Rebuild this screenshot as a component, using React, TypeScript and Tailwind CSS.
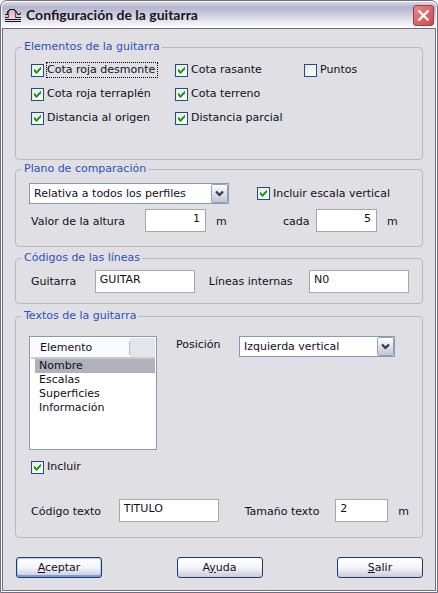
import { useState } from "react";
import type { ReactNode } from "react";

const field =
  "h-[23px] border border-[#a7a6aa] bg-white px-1 pb-1 text-[11px] leading-[14px] text-[#101018] outline-none";

function Group({ title, className, children }: { title: string; className: string; children: ReactNode }) {
  return (
    <fieldset className={`min-w-0 rounded-[4px] border border-[#b9b8c4] px-[13px] ${className}`}>
      <legend className="-ml-[7px] h-[14px] px-0.5 text-[#2c4fc0]">{title}</legend>
      {children}
    </fieldset>
  );
}

function Check({ label, checked = true, focused = false }: { label: string; checked?: boolean; focused?: boolean }) {
  const [on, setOn] = useState(checked);
  return (
    <label className="flex h-[14px] items-center gap-0.5 whitespace-nowrap">
      <span className="relative h-[13px] w-[13px] shrink-0">
        <input
          type="checkbox"
          checked={on}
          onChange={(e) => setOn(e.target.checked)}
          className="block h-[13px] w-[13px] appearance-none border border-[#1f4e7f] bg-linear-to-br from-[#e6e8e4] to-white"
        />
        {on && (
          <svg viewBox="0 0 13 13" className="pointer-events-none absolute inset-0" shapeRendering="crispEdges">
            <path d="M3 5h1v1h1v1h1v-1h1v-1h1v-1h1v-1h1v3h-1v1h-1v1h-1v1h-1v1h-1v-1h-1v-1h-1z" fill="#21a121" />
          </svg>
        )}
      </span>
      <span className={`border border-dotted pr-0.5 ${focused ? "border-black" : "border-transparent"}`}>{label}</span>
    </label>
  );
}

function Combo({ id, options, className, label }: { id: string; options: string[]; className: string; label?: string }) {
  return (
    <div className={`relative h-[21px] ${className}`}>
      <select
        id={id}
        aria-label={label}
        className="block h-full w-full appearance-none border border-[#7f9db9] bg-white pr-5 pl-1 text-[11px] leading-[14px] text-[#101018] outline-none"
      >
        {options.map((o) => (
          <option key={o}>{o}</option>
        ))}
      </select>
      <span className="pointer-events-none absolute top-px right-px flex h-[19px] w-[17px] items-center justify-center rounded-[2px] border border-[#94a2bd] bg-linear-to-b from-white to-[#c3c3d2]">
        <svg width="9" height="7" viewBox="0 0 9 7">
          <path d="M1 1.5l3.5 3.5L8 1.5" fill="none" stroke="#33334a" strokeWidth="2.2" />
        </svg>
      </span>
    </div>
  );
}

function PushButton({ before = "", mnemonic, after, primary = false }: { before?: string; mnemonic: string; after: string; primary?: boolean }) {
  return (
    <button
      type="button"
      className={`h-[21px] w-[86px] rounded-[3px] border border-[#1c3f70] bg-linear-to-b from-white via-[#f4f4f9] to-[#c9c9dc] leading-[14px] ${
        primary ? "shadow-[inset_0_-2px_0_#7f9be0,inset_0_0_0_1px_#b9cbf3]" : ""
      }`}
    >
      {before}
      <u>{mnemonic}</u>
      {after}
    </button>
  );
}

const items = ["Nombre", "Escalas", "Superficies", "Información"];

export default function App() {
  const [selected, setSelected] = useState("Nombre");
  return (
    <div className="bg-[#f4f4f4]">
      <main className="rounded-t-[7px] border border-[#706d85] bg-white p-px font-['DejaVu_Sans',Verdana,sans-serif] text-[11px] leading-[14px] text-[#101018]">
        <header className="flex h-[26px] items-center gap-[5px] rounded-t-[5px] bg-linear-to-b from-[#d9d9e6] via-[#b4b4cc] via-20% to-white pr-0.5 pl-[3px]">
          <svg width="16" height="16" viewBox="0 0 16 16" fill="none" aria-hidden="true">
            <path d="M0 10.5h4M10 10.5h6M0 12.5h16M0 14.5h16" stroke="#111" shapeRendering="crispEdges" />
            <path d="M0 7.500h2.500V5L5 2.500h4L11.500 5l1.500 2.500h1.500L16 5.500" stroke="#111" strokeWidth="1.200" />
            <path d="M3.500 11V5M10.500 11V5" stroke="#e02030" strokeWidth="1.200" />
          </svg>
          <h1 className="flex-1 font-[Lato,sans-serif] text-[14px] leading-[18px] font-bold text-[#17171f]">
            Configuración de la guitarra
          </h1>
          <button
            type="button"
            aria-label="Cerrar"
            className="flex h-[21px] w-[21px] items-center justify-center rounded-[3px] border border-[#a83a48] bg-linear-to-br from-[#e58a8a] to-[#cc4848]"
          >
            <svg width="13" height="13" viewBox="0 0 13 13" aria-hidden="true">
              <path d="M1.500 1.500l10 10M11.500 1.500l-10 10" stroke="white" strokeWidth="2.300" />
            </svg>
          </button>
        </header>

        <form className="border border-[#706d85] bg-[#e0dfe4] px-3 pt-[11px] pb-3" onSubmit={(e) => e.preventDefault()}>
          <Group title="Elementos de la guitarra" className="pt-[9px] pb-[34px]">
            <div className="grid grid-cols-[144fr_129fr_105fr] gap-y-2.5 pl-0.5">
              <Check label="Cota roja desmonte" focused />
              <Check label="Cota rasante" />
              <Check label="Puntos" checked={false} />
              <Check label="Cota roja terraplén" />
              <Check label="Cota terreno" />
              <span />
              <Check label="Distancia al origen" />
              <Check label="Distancia parcial" />
            </div>
          </Group>

          <Group title="Plano de comparación" className="mt-0.5 pt-[7px] pb-[14px]">
            <div className="flex items-center gap-7">
              <Combo id="plano" label="Plano de comparación" className="w-[200px]" options={["Relativa a todos los perfiles"]} />
              <Check label="Incluir escala vertical" />
            </div>
            <div className="mt-[5px] flex items-center pl-0.5">
              <label htmlFor="altura" className="w-[114px] pt-0.5">Valor de la altura</label>
              <input id="altura" defaultValue="1" className={`${field} w-[61px] pr-[5px] text-right`} />
              <span className="ml-2.5 w-[67px] pt-0.5">m</span>
              <label htmlFor="cada" className="w-[33px] pt-0.5">cada</label>
              <input id="cada" defaultValue="5" className={`${field} w-[61px] pr-[5px] text-right`} />
              <span className="ml-2.5 pt-0.5">m</span>
            </div>
          </Group>

          <Group title="Códigos de las líneas" className="mt-1 pt-[5px] pb-2.5">
            <div className="flex items-center pl-0.5">
              <label htmlFor="guitarra" className="w-[65px]">Guitarra</label>
              <input id="guitarra" defaultValue="GUITAR" className={`${field} w-[100px]`} />
              <label htmlFor="lineas" className="ml-3.5 w-[102px]">Líneas internas</label>
              <input id="lineas" defaultValue="N0" className={`${field} w-[100px]`} />
            </div>
          </Group>

          <Group title="Textos de la guitarra" className="mt-[5px] pt-[13px] pb-[15px]">
            <div className="flex items-start">
              <div className="h-[114px] w-32 border border-[#7f9db9] bg-white p-px">
                <table className="w-full border-collapse">
                  <thead>
                    <tr className="h-5 border-b-2 border-[#c9cbd0] bg-[#e3e5e8]">
                      <th className="w-[99px] bg-[#fafbfd] p-0 pl-[9px] text-left font-normal">
                        <span className="block border-r border-[#b8bcc4]">Elemento</span>
                      </th>
                      <th className="p-0" />
                    </tr>
                  </thead>
                  <tbody>
                    {items.map((item) => (
                      <tr key={item} className="h-[14px] cursor-default" onClick={() => setSelected(item)}>
                        <td colSpan={2} className="p-0 pl-1">
                          <span className={`block pl-1 ${selected === item ? "bg-[#b2b0bc]" : ""}`}>{item}</span>
                        </td>
                      </tr>
                    ))}
                  </tbody>
                </table>
              </div>
              <label htmlFor="posicion" className="ml-[19px] w-[63px] pt-0.5">Posición</label>
              <Combo id="posicion" className="w-[156px]" options={["Izquierda vertical"]} />
            </div>
            <div className="mt-2.5 pl-0.5">
              <Check label="Incluir" />
            </div>
            <div className="mt-[25px] flex items-center pl-0.5">
              <label htmlFor="codigo" className="w-[89px] pt-0.5">Código texto</label>
              <input id="codigo" defaultValue="TITULO" className={`${field} w-[100px]`} />
              <label htmlFor="tamano" className="ml-[26px] w-[92px] pt-0.5">Tamaño texto</label>
              <input id="tamano" defaultValue="2" className={`${field} w-[53px]`} />
              <span className="ml-2.5 pt-0.5">m</span>
            </div>
          </Group>

          <div className="mt-[19px] flex justify-between pl-px">
            <PushButton mnemonic="A" after="ceptar" primary />
            <PushButton before="A" mnemonic="y" after="uda" />
            <PushButton mnemonic="S" after="alir" />
          </div>
        </form>
      </main>
    </div>
  );
}
